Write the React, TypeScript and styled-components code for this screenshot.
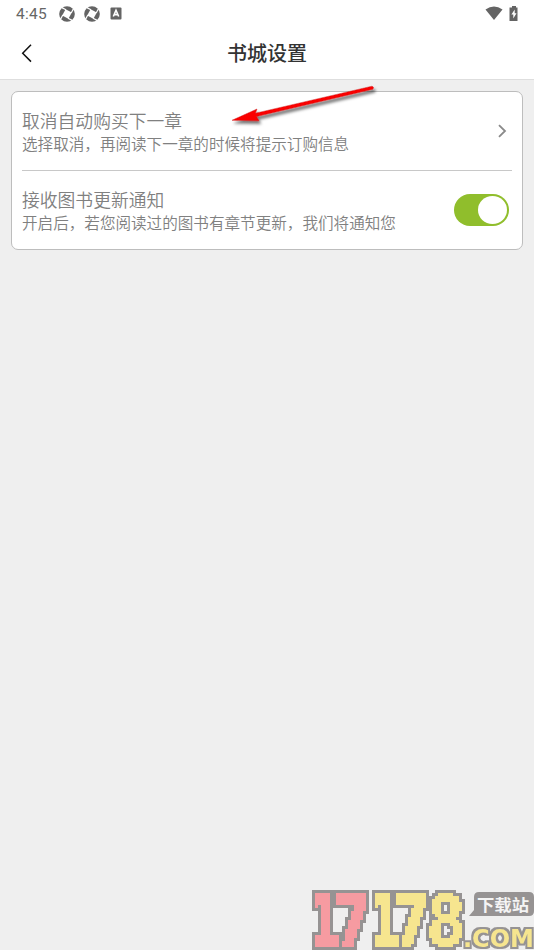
import React from "react";
import styled, { createGlobalStyle } from "styled-components";

const GlobalStyle = createGlobalStyle`
  * { box-sizing: border-box; }
  body {
    margin: 0;
    background: #efefef;
    font-family: Roboto, "Noto Sans CJK SC", sans-serif;
  }
`;

const Screen = styled.main`
  position: relative;
  width: 534px;
  height: 950px;
  overflow: hidden;
  background: #efefef;
`;

const StatusBar = styled.div`
  display: flex;
  justify-content: space-between;
  height: 28px;
  padding: 0 15px 0 16px;
  background: #fff;
`;

const StatusGroup = styled.div<{ $gap: number }>`
  display: flex;
  align-items: center;
  gap: ${(p) => p.$gap}px;
  height: 27px;
`;

const Clock = styled.span`
  width: 34px;
  font-size: 15.5px;
  line-height: 20px;
  letter-spacing: 0.25px;
  color: #666;
  padding-top: 1px;
`;

const Header = styled.header`
  display: grid;
  grid-template-columns: 54px 1fr 54px;
  align-items: center;
  height: 52px;
  background: #fff;
  border-bottom: 1px solid #dedede;
`;

const BackButton = styled.button`
  display: flex;
  padding: 0 0 1px 20px;
  border: 0;
  background: none;
`;

const Title = styled.h1`
  margin: 0;
  text-align: center;
  font-size: 20px;
  line-height: 28px;
  font-weight: 500;
  color: #333;
`;

const Card = styled.section`
  margin: 11px 11px 0;
  height: 159px;
  padding: 0 10px;
  border: 1px solid #bdbdbd;
  border-radius: 7px;
  background: #fff;
`;

const Row = styled.div<{ $divided?: boolean }>`
  display: flex;
  align-items: center;
  justify-content: space-between;
  height: ${(p) => (p.$divided ? 79 : 78)}px;
  border-bottom: ${(p) => (p.$divided ? "1px solid #c8c8c8" : "0")};
`;

const RowText = styled.div`
  display: flex;
  flex-direction: column;
  padding-top: 4px;
`;

const RowTitle = styled.span`
  font-size: 17.8px;
  line-height: 24px;
  font-weight: 350;
  color: #808080;
`;

const RowHint = styled.span`
  font-size: 15.58px;
  line-height: 23px;
  font-weight: 350;
  color: #808080;
`;

const Chevron = styled.svg`
  display: block;
  margin-right: 4px;
`;

const Toggle = styled.button`
  display: flex;
  justify-content: flex-end;
  align-items: center;
  width: 55px;
  height: 32px;
  margin-right: 3px;
  padding: 0 2px 0 0;
  border: 0;
  border-radius: 16px;
  background: #90be2c;
`;

const Knob = styled.span`
  width: 29px;
  height: 28px;
  border-radius: 50%;
  background: #fff;
`;

const Pointer = styled.svg`
  position: absolute;
  left: 223px;
  top: 78px;
  pointer-events: none;
`;

const Watermark = styled.svg`
  position: absolute;
  right: 0;
  bottom: 0;
  pointer-events: none;
`;

const Digits = styled.text`
  font-family: "DejaVu Sans", sans-serif;
  font-weight: 700;
  font-size: 71px;
`;

const Domain = styled.text`
  font-family: "DejaVu Sans", sans-serif;
  font-weight: 700;
  font-size: 25px;
  fill: #f6e58f;
`;

const BadgeText = styled.text`
  font-family: "Noto Sans CJK SC", sans-serif;
  font-weight: 700;
  font-size: 16px;
  fill: #f4f4f4;
`;

const SpinnerIcon = () => (
  <svg width="16" height="16" viewBox="0 0 16 16">
    <circle cx="8" cy="8" r="7.8" fill="#646464" />
    <path d="M6.6 3.2 12.8 6.6 9.4 12.8 3.2 9.4Z" fill="#fff" />
    <g stroke="#fff" strokeWidth="1.2">
      <path d="M7 3.8 2.8 1.6M12.2 7l2.2-4.2M9 12.2l4.2 2.2M3.8 9 1.6 13.2" />
    </g>
  </svg>
);

const DIGITS = [
  { value: "1", x: 310, width: 30.5, fill: "#f69ba1", weight: 3 },
  { value: "7", x: 334.5, width: 36, fill: "#f69ba1", weight: 2 },
  { value: "1", x: 370, width: 30.5, fill: "#f6e58f", weight: 3 },
  { value: "7", x: 393.5, width: 36, fill: "#f6e58f", weight: 2 },
  { value: "8", x: 426.5, width: 39, fill: "#f6e58f", weight: 0 },
];

export default function App() {
  return (
    <Screen>
      <GlobalStyle />
      <StatusBar>
        <StatusGroup $gap={9}>
          <Clock>4:45</Clock>
          <SpinnerIcon />
          <SpinnerIcon />
          <svg width="14" height="13" viewBox="0 0 14 13">
            <rect x="1.5" y="0.5" width="11" height="12" rx="1" fill="#646464" />
            <path d="M4.3 9.5 7 3.2l2.7 6.3M5.2 7.6h3.6" fill="none" stroke="#fff" strokeWidth="1.6" />
          </svg>
        </StatusGroup>
        <StatusGroup $gap={6}>
          <svg width="18" height="15" viewBox="0 0 18 15">
            <path d="M0.5 3.5Q9-2.6 17.5 3.5L9 14Z" fill="#646464" />
          </svg>
          <svg width="10" height="16" viewBox="0 0 10 16">
            <path d="M3 0h4V1.5h1.5V15h-8V1.5H3Z" fill="#646464" />
            <path d="M5.7 3.5 2.4 8.5h1.9v4l3.2-5.2H5.7Z" fill="#fff" />
          </svg>
        </StatusGroup>
      </StatusBar>
      <Header>
        <BackButton aria-label="返回">
          <svg width="13" height="20" viewBox="0 0 13 20" fill="none">
            <path d="M11 1.8 2.7 10.2 11 18.6" stroke="#111" strokeWidth="1.5" />
          </svg>
        </BackButton>
        <Title>书城设置</Title>
      </Header>
      <Card>
        <Row $divided>
          <RowText>
            <RowTitle>取消自动购买下一章</RowTitle>
            <RowHint>选择取消，再阅读下一章的时候将提示订购信息</RowHint>
          </RowText>
          <Chevron width="11" height="16" viewBox="0 0 11 16" fill="none">
            <path d="M2 2.2 8 8 2 13.8" stroke="#8a8a8a" strokeWidth="1.8" />
          </Chevron>
        </Row>
        <Row>
          <RowText>
            <RowTitle>接收图书更新通知</RowTitle>
            <RowHint>开启后，若您阅读过的图书有章节更新，我们将通知您</RowHint>
          </RowText>
          <Toggle role="switch" aria-checked="true" aria-label="接收图书更新通知">
            <Knob />
          </Toggle>
        </Row>
      </Card>
      <Pointer width="170" height="58" viewBox="222 78 170 58">
        <defs>
          <filter id="soft" x="-10%" y="-30%" width="120%" height="180%">
            <feDropShadow dx="2" dy="3" stdDeviation="1.7" floodColor="#000" floodOpacity="0.55" />
          </filter>
        </defs>
        <path
          d="M231 120.3 256 109 254.5 113.2 371 86.2Q373.5 87 371.8 89.2L255.5 116.5 258 120.8Z"
          fill="#fa0505"
          stroke="#c51212"
          strokeWidth="0.4"
          filter="url(#soft)"
        />
      </Pointer>
      <Watermark width="228" height="72" viewBox="306 878 228 72">
        <defs>
          {/* Samples the artwork on a 3px grid, then grows a grey rim around it. */}
          <filter
            id="pixel"
            filterUnits="userSpaceOnUse"
            x="306"
            y="878"
            width="228"
            height="72"
            colorInterpolationFilters="sRGB"
          >
            <feFlood x="307" y="879" width="1" height="1" floodColor="#000" result="dot" />
            <feComposite in="dot" in2="dot" operator="over" x="306" y="878" width="3" height="3" result="cell" />
            <feTile in="cell" result="grid" />
            <feComposite in="SourceGraphic" in2="grid" operator="in" result="samples" />
            <feMorphology in="samples" operator="dilate" radius="1" result="blocks" />
            <feComponentTransfer in="blocks" result="crisp">
              <feFuncA type="discrete" tableValues="0 1" />
            </feComponentTransfer>
            <feMorphology in="crisp" operator="dilate" radius="3" result="grown" />
            <feFlood floodColor="#969393" />
            <feComposite in2="grown" operator="in" result="rim" />
            <feMerge>
              <feMergeNode in="rim" />
              <feMergeNode in="crisp" />
            </feMerge>
          </filter>
          <filter
            id="rim"
            filterUnits="userSpaceOnUse"
            x="306"
            y="878"
            width="228"
            height="72"
            colorInterpolationFilters="sRGB"
          >
            <feMorphology in="SourceAlpha" operator="dilate" radius="2" result="grown" />
            <feFlood floodColor="#969393" />
            <feComposite in2="grown" operator="in" result="edge" />
            <feMerge>
              <feMergeNode in="edge" />
              <feMergeNode in="SourceGraphic" />
            </feMerge>
          </filter>
        </defs>
        <g filter="url(#pixel)">
          <Digits y="946">
            {DIGITS.map((d, i) => (
              <tspan
                key={i}
                x={d.x}
                textLength={d.width}
                lengthAdjust="spacingAndGlyphs"
                fill={d.fill}
                stroke={d.fill}
                strokeWidth={d.weight}
              >
                {d.value}
              </tspan>
            ))}
          </Digits>
        </g>
        <path d="M479 892H529Q534 892 534 897V911Q534 916 529 916H469L474 910V897Q474 892 479 892Z" fill="#969393" />
        <BadgeText x="477" y="910.5" textLength="52" lengthAdjust="spacingAndGlyphs">下载站</BadgeText>
        <g filter="url(#rim)">
          <Domain x="463" y="946.5" textLength="71" lengthAdjust="spacingAndGlyphs">.COM</Domain>
        </g>
      </Watermark>
    </Screen>
  );
}
